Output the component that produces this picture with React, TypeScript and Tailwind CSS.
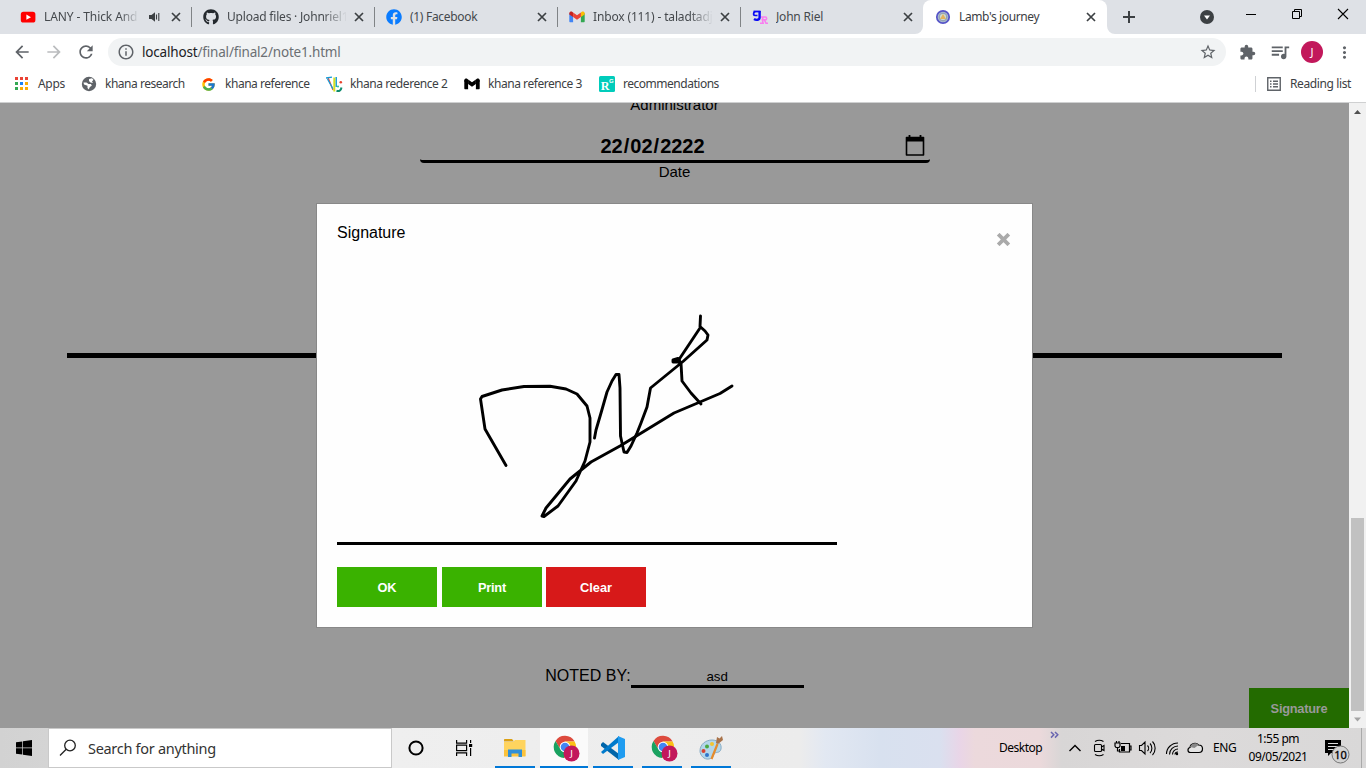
import type { ReactNode } from "react";
import { FaFacebook, FaGithub } from "react-icons/fa";
import { FcGoogle } from "react-icons/fc";
import {
  MdArrowBack,
  MdArrowForward,
  MdExtension,
  MdInfoOutline,
  MdMoreVert,
  MdQueueMusic,
  MdRefresh,
  MdStarBorder,
} from "react-icons/md";

const Cross = () => (
  <svg width="10" height="10" viewBox="0 0 10 10" stroke="#3c4043" strokeWidth="1.7">
    <path d="M1 1 9 9M9 1 1 9" />
  </svg>
);

const GmailIcon = ({ mono = false }: { mono?: boolean }) => (
  <svg width="16" height="16" viewBox="0 0 16 16">
    <path d="M.3 4v8.200c0 .6.4 1 1 1h2.800V7z" fill={mono ? "#000" : "#4285f4"} />
    <path d="M15.700 4v8.200c0 .6-.4 1-1 1h-2.800V7z" fill={mono ? "#000" : "#34a853"} />
    <path d="M.3 5.600V4.200C.3 2.800 2.300 2.100 3.400 2.900L4.100 3.400V8z" fill={mono ? "#000" : "#c5221f"} />
    <path d="M15.700 5.600V4.200c0-1.400-2-2.100-3.100-1.300l-.7.5V8z" fill={mono ? "#000" : "#fbbc04"} />
    <path d="M4.100 3.400 8 6.200l3.900-2.800V8L8 10.700 4.100 8z" fill={mono ? "#000" : "#ea4335"} />
  </svg>
);

const YoutubeIcon = () => (
  <svg width="16" height="16" viewBox="0 0 16 16">
    <rect x="0.8" y="2.8" width="14.6" height="10.8" rx="2.6" fill="#f00" />
    <path d="M6.4 5.600v5.200L11 8.200z" fill="#fff" />
  </svg>
);

const JrIcon = () => (
  <svg width="16" height="16" viewBox="0 0 16 16" fill="none">
    <path d="M1.500 2.500h7" stroke="#0a0af5" strokeWidth="1.800" />
    <path d="M3 2.500C1 4 1 6.500 3.500 6.500h2" stroke="#0a0af5" strokeWidth="1.700" />
    <path d="M7.600 2v6.500c0 2.500-3.500 3-5.600 1.500" stroke="#0a0af5" strokeWidth="2.400" />
    <path d="M9 8h4.500c1.500 0 1.500 2.800 0 2.800h-4M10.700 8v6M8 14.300h4M12.500 11l1.500 3.300h2" stroke="#f97df0" strokeWidth="1.600" />
  </svg>
);

const CrestIcon = () => (
  <svg width="16" height="16" viewBox="0 0 16 16">
    <circle cx="8" cy="8" r="6.200" fill="#a9b8cc" stroke="#5654c8" strokeWidth="1.700" />
    <circle cx="8" cy="8" r="3.800" fill="#cfdbcf" stroke="#7d8fa8" strokeWidth=".8" />
    <path d="M6.500 7.500 8 5l1.500 2.500L11 10H5z" fill="#e2b25c" />
  </svg>
);

type Tab = { icon: ReactNode; title: string; tone: string; audio?: boolean };

const tabs: Tab[] = [
  { icon: <YoutubeIcon />, title: "LANY - Thick And Thin", tone: "w-[95px] tracking-[-0.1px]", audio: true },
  { icon: <FaGithub size={16} color="#24292e" />, title: "Upload files · Johnriel123", tone: "w-[120px] tracking-[-0.2px]" },
  { icon: <FaFacebook size={16} color="#0a7cff" />, title: "(1) Facebook", tone: "w-[120px] tracking-[-0.3px]" },
  { icon: <GmailIcon />, title: "Inbox (111) - taladtadjo", tone: "w-[120px] tracking-[-0.15px]" },
  { icon: <JrIcon />, title: "John Riel", tone: "w-[120px] tracking-[-0.2px]" },
];

function TabStrip() {
  return (
    <div className="flex h-[34px] bg-[#dee1e6] pl-2">
      {tabs.map((t, i) => (
        <div key={t.title} className="flex h-[34px] w-[183px] shrink-0 items-center pl-3">
          <span className="h-4 w-4 shrink-0">{t.icon}</span>
          <span
            className={`ml-2 block shrink-0 overflow-hidden text-[12px] whitespace-nowrap text-[#45494d] ${t.tone} ${
              i === 2 || i === 4 ? "" : "[mask-image:linear-gradient(to_right,#000_80%,transparent)]"
            }`}
          >
            {t.title}
          </span>
          {t.audio && (
            <svg className="ml-[10px]" width="12" height="12" viewBox="0 0 12 12" fill="#3c4043">
              <path d="M0 4h2.500L6 1.200v9.600L2.500 8H0z" />
              <path d="M7.500 3.500v5M9.800 2v8" stroke="#3c4043" strokeWidth="1.100" />
            </svg>
          )}
          <span className={t.audio ? "ml-[10px]" : "ml-[7px]"}>
            <Cross />
          </span>
          {i < 4 && <span className="-mr-px ml-auto h-5 w-px bg-[#808386]" />}
        </div>
      ))}
      <div className="flex h-[34px] w-[184px] shrink-0 items-center rounded-t-lg bg-white pl-3">
        <CrestIcon />
        <span className="ml-2 w-[120px] text-[12px] tracking-[-0.38px] text-[#3c4043]">Lamb's journey</span>
        <span className="ml-[7px]">
          <Cross />
        </span>
      </div>
      <svg className="-ml-[192px] shrink-0" width="8" height="34" viewBox="0 0 8 34">
        <path d="M8 26v8H0a8 8 0 0 0 8-8" fill="#fff" />
      </svg>
      <svg className="ml-[184px] shrink-0" width="259" height="34" viewBox="1107 0 259 34" fill="none">
        <path d="M1107 26v8h8a8 8 0 0 1-8-8" fill="#fff" />
        <path d="M1129 11v12M1123 17h12" stroke="#3c4043" strokeWidth="2" />
        <circle cx="1207" cy="17" r="7" fill="#3c4043" />
        <path d="M1204 15.500h6l-3 4z" fill="#fff" />
        <path d="M1246 14.500h10" stroke="#000" />
        <path d="M1292.500 11.500h7v7h-7zM1294.500 11.500v-2h7v7h-2" stroke="#000" />
        <path d="m1338 9 10 10M1348 9l-10 10" stroke="#000" strokeWidth="1.100" />
      </svg>
    </div>
  );
}

function Toolbar() {
  return (
    <div className="flex h-9 items-center bg-white text-[#5f6368]">
      <MdArrowBack size={20} className="ml-3" />
      <MdArrowForward size={20} className="ml-3 text-[#babcbe]" />
      <MdRefresh size={20} className="ml-3" />
      <div className="ml-3 flex h-7 w-[1118px] items-center rounded-full bg-[#f1f3f4] pl-[9px]">
        <MdInfoOutline size={18} />
        <span className="ml-[7px] text-[13.5px] tracking-[-0.18px] text-[#6b6f73]">
          <span className="text-[#202124]">localhost</span>/final/final2/note1.html
        </span>
        <MdStarBorder size={18} className="mr-[9px] ml-auto" />
      </div>
      <MdExtension size={17} className="ml-[13px]" />
      <MdQueueMusic size={22} className="ml-[13px]" />
      <div className="ml-[10px] flex h-[22px] w-[22px] items-center justify-center rounded-full bg-[#c2185b] text-[11px] text-white">
        J
      </div>
      <MdMoreVert size={19} className="ml-[12px]" />
    </div>
  );
}

const AppsGrid = () => (
  <svg width="14" height="14" viewBox="0 0 14 14">
    <path d="M0 0h3v3H0zM5 0h3v3H5zM10 0h3v3h-3z" fill="#ea4335" />
    <path d="M0 5h3v3H0zM0 10h3v3H0z" fill="#34a853" />
    <path d="M5 5h3v3H5z" fill="#1a82f7" />
    <path d="M10 5h3v3h-3zM5 10h3v3H5zM10 10h3v3h-3z" fill="#fbac04" />
  </svg>
);

const VcIcon = () => (
  <svg width="17" height="17" viewBox="0 0 17 17" fill="none">
    <path d="m2 1.500 5 12.500" stroke="#f04a36" strokeWidth="1.300" />
    <path d="M0 2 6 1.200M1.500 3 7 13" stroke="#159bd7" strokeWidth="1.300" />
    <path d="M10.200 1v10" stroke="#159bd7" strokeWidth="1.500" />
    <path d="M8.300 1.500v14" stroke="#d4df22" strokeWidth="2" />
    <path d="M10.500 14.800c3 1 4.500-.8 5-3.300" stroke="#0c8a6c" strokeWidth="2" />
    <circle cx="14.800" cy="6.200" r="1.300" fill="#e8432d" />
    <circle cx="12" cy="10.500" r="1" fill="#27b99a" />
  </svg>
);

function Bookmarks() {
  return (
    <div className="flex h-[33px] items-center border-b border-[#cfd0d1] bg-white pb-[4px] text-[12px] whitespace-nowrap text-[#3c4043]">
      <span className="ml-[15px]">
        <AppsGrid />
      </span>
      <span className="ml-[9px] w-[43px] tracking-[-0.3px]">Apps</span>
      <svg width="16" height="16" viewBox="0 0 16 16">
        <circle cx="8" cy="8" r="7.200" fill="#5f6368" />
        <path d="M2.500 6.500h3l2 1.500h2.500l.8 1.800-2 1.200-1 2.500L6.500 12V9.800L3 8.500zM8 3l3-.8 1.500 1.600L11 5.500l1 1.500-2.500-.5L8 5z" fill="#fff" />
      </svg>
      <span className="ml-2 w-[96px] tracking-[-0.48px]">khana research</span>
      <FcGoogle size={15} />
      <span className="ml-[9px] w-[101px] tracking-[-0.47px]">khana reference</span>
      <VcIcon />
      <span className="ml-[7px] w-[114px] tracking-[-0.43px]">khana rederence 2</span>
      <GmailIcon mono />
      <span className="ml-2 w-[111px] tracking-[-0.45px]">khana reference 3</span>
      <svg width="16" height="16" viewBox="0 0 16 16">
        <rect width="16" height="16" rx="1.500" fill="#00ccbb" />
        <text x="1.800" y="13.500" fontSize="12" fontWeight="bold" fill="#fff" fontFamily="Liberation Serif">R</text>
        <text x="10" y="6.500" fontSize="6" fontWeight="bold" fill="#fff" fontFamily="Liberation Sans">G</text>
      </svg>
      <span className="ml-2 tracking-[-0.48px]">recommendations</span>
      <span className="ml-auto h-4 w-px bg-[#cfd1d4]" />
      <svg className="ml-[11px]" width="14" height="14" viewBox="0 0 14 14" stroke="#5f6368" fill="none">
        <path d="M.75.75h12.500v12.500H.75z" strokeWidth="1.400" />
        <path d="M3 4.200h1.500M3 7h1.500M3 9.800h1.500M6 4.200h5M6 7h5M6 9.800h5" strokeWidth="1.400" />
      </svg>
      <span className="ml-[9px] w-[76px] tracking-[-0.38px]">Reading list</span>
    </div>
  );
}

function Scrollbar() {
  return (
    <div className="flex h-full w-[17px] shrink-0 flex-col items-center justify-between bg-[#f1f1f1]">
      <svg width="17" height="17" viewBox="0 0 17 17">
        <path d="M5 11h7L8.500 7z" fill="#505050" />
      </svg>
      <div className="mt-auto h-[193px] w-[13px] bg-[#c1c1c1]" />
      <svg width="17" height="17" viewBox="0 0 17 17">
        <path d="M5 6.500h7l-3.500 4z" fill="#a3a3a3" />
      </svg>
    </div>
  );
}

function SignatureDialog() {
  return (
    <div className="absolute top-[100px] left-[316px] flex h-[425px] w-[717px] flex-col border border-[#888] bg-[#fefefe] px-5 pt-[19px]">
      <div className="flex h-5 items-start justify-between">
        <span className="text-base leading-5">Signature</span>
        <svg className="mt-[10px] mr-px" width="15" height="13" viewBox="0 0 15 13" fill="none" stroke="#aaa" strokeWidth="3.800">
          <path d="M2.200 1.200 12.800 11.800M12.800 1.200 2.200 11.800" />
        </svg>
      </div>
      <svg className="h-[302px] w-[500px] border-b-[3px] border-black" viewBox="337 243 500 299" fill="none" stroke="#000" strokeWidth="2.900" strokeLinecap="round" strokeLinejoin="round">
        <path d="M506 465.500 485 429 480.500 399 482 396.500 502 390 524 386.500 550 386.200 566 389 577 394 587 406 590 418 590 442 585 461 576 481 558 506 544 516.500 542 516 546 508 570 479 591 462 620 446 674 413 700 402 720 393.500 732 386" />
        <path d="M594.500 438 596 430 601 413 607 392 612 381 616 374.500 619 374.500 620 388 620.500 436 624 452 627 452.500 631 446 637 433 641 423 647 407 650.500 388 683 361.500 707 340 708 335 705 331 700 326.500 700.500 316M700 328 680 358 678 362 673 362 673 360 678 358.500 681 363 682 381 691 393 701 404" />
      </svg>
      <div className="mt-[22px] flex text-[12.8px] font-bold text-white">
        <button className="h-10 w-[100px] bg-[#3ab200] pt-px">OK</button>
        <button className="ml-[5px] h-10 w-[100px] bg-[#3ab200] pt-px tracking-[-0.25px]">Print</button>
        <button className="ml-1 h-10 w-[100px] bg-[#d71919] pt-px">Clear</button>
      </div>
    </div>
  );
}

function PageView() {
  return (
    <div className="flex h-[625px] overflow-hidden font-['Liberation_Sans',Arial,sans-serif]">
      <main className="relative flex h-full w-[1349px] shrink-0 flex-col items-center bg-[#999] text-black">
        <div className="-mt-[7px] h-[17px] text-[15px] leading-[17px]">Administrator</div>
        <div className="mt-[17px] flex h-[33px] w-[510px] items-center rounded-[4px] border-b-[3px] border-black">
          <div className="ml-[180px] flex pt-px text-[20px] font-bold">
            <span className="px-px">22</span>/<span className="px-px">02</span>/<span className="px-px">2222</span>
          </div>
          <svg className="mr-[5px] ml-auto" width="20" height="22" viewBox="0 0 20 22" fill="none" stroke="#000">
            <path d="M1.500 3.500h17v17.500h-17z" strokeWidth="1.600" strokeLinejoin="round" />
            <path d="M1 3h18v4.500H1z" fill="#000" strokeWidth="0" />
            <path d="M4.500 1v3M15.500 1v3" strokeWidth="1.800" />
          </svg>
        </div>
        <div className="h-[17px] text-[15px] leading-[17px]">Date</div>
        <div className="mt-[173px] h-[5px] w-[1215px] bg-black" />
        <div className="mt-[306px] flex h-6 items-start">
          <span className="text-base leading-[24px]">NOTED BY:</span>
          <span className="h-6 w-[173px] border-b-[3px] border-black pt-[4px] text-center text-[13.333px] leading-[17px]">asd</span>
        </div>
        <button className="mt-auto h-10 w-[100px] self-end bg-[#236b00] pt-px text-[12.8px] font-bold tracking-[-0.25px] text-[#999]">
          Signature
        </button>
        <SignatureDialog />
      </main>
      <Scrollbar />
    </div>
  );
}

const FolderIcon = () => (
  <svg width="24" height="24" viewBox="0 0 24 24">
    <path d="M1 4c0-.6.400-1 1-1h7l2 2.500H1z" fill="#dba013" />
    <path d="M1 6h9l2-2h10.500v16H1z" fill="#ffd45e" />
    <path d="M1 14h21.500v6.500H1z" fill="#fbc23c" />
    <path d="M5 13.500h14V21h-3.500v-3.500h-7V21H5z" fill="#2f8fd8" />
  </svg>
);

const ChromeIcon = () => (
  <svg className="ml-[3px]" width="28" height="28" viewBox="0 0 28 28">
    <path d="M3.500 7A11 11 0 0 1 22.600 7.500L12.800 7.500 7.500 14z" fill="#dd4b3e" />
    <path d="M3.500 7A11 11 0 0 0 12 24l4.500-6L8 14.500z" fill="#1aa260" />
    <path d="M22.600 7.500A11 11 0 0 1 12 24l5.500-11-4.700-5.500z" fill="#fbc116" />
    <circle cx="13" cy="13" r="5.300" fill="#fff" />
    <circle cx="13" cy="13" r="4.300" fill="#4285f4" />
    <circle cx="19.500" cy="19.500" r="8" fill="#c2185b" />
    <text x="19.500" y="23" textAnchor="middle" fontSize="9.500" fill="#fff" fontFamily="Noto Sans">J</text>
  </svg>
);

const CodeIcon = () => (
  <svg width="26" height="26" viewBox="0 0 26 26">
    <path d="m1 9 2-2 16 12v6L1 11z" fill="#0065a9" />
    <path d="M1 17 19 1v6L3 19z" fill="#007acc" />
    <path d="m18 1 7 3v18l-7 3z" fill="#1f9cf0" />
  </svg>
);

const PaintIcon = () => (
  <svg width="26" height="26" viewBox="0 0 26 26">
    <path d="M2 16C2 9 8 5 14 5s10 4 9 9c-1 4-4 3-6 4s-1 5-6 6S2 20 2 16z" fill="#b3d6ea" stroke="#86abc4" />
    <circle cx="5.500" cy="16" r="2" fill="#d9422e" />
    <circle cx="9" cy="11.500" r="2" fill="#49a942" />
    <circle cx="14" cy="9" r="2" fill="#f4c430" />
    <circle cx="9" cy="20" r="2" fill="#2f74c9" />
    <path d="m13.500 24 6-15" stroke="#e58b2c" strokeWidth="2.200" />
    <path d="m18 8 1-6 2.500 1.500L24 1l1 4-5 4z" fill="#a9734a" />
  </svg>
);

const apps = [
  { key: "files", icon: <FolderIcon />, cell: "w-[50px]", bar: "w-10" },
  { key: "chrome", icon: <ChromeIcon />, cell: "w-12 bg-[#fafafa]", bar: "w-12" },
  { key: "code", icon: <CodeIcon />, cell: "w-[50px]", bar: "w-10" },
  { key: "chrome2", icon: <ChromeIcon />, cell: "w-12", bar: "w-10" },
  { key: "paint", icon: <PaintIcon />, cell: "w-[50px]", bar: "w-10" },
];

function Taskbar() {
  return (
    <div className="flex h-10 bg-[linear-gradient(90deg,#d2d2d2_0px,#d4d4d4_48px,#efefef_392px,#ececec_800px,#e2e8f2_825px,#d8e1ef_880px,#dae0ef_940px,#e9d5e7_960px,#ecd9dc_975px,#ebd9db_1040px,#d8d6d6_1062px,#dcdada_1200px,#d9d8d8_1366px)] text-black">
      <div className="flex w-12 items-center justify-center">
        <svg width="16" height="16" viewBox="0 0 16 16">
          <path d="M0 2.300 6.300 1.400v6.100H0zM7 1.300 16 0v7.500H7zM0 8.300h6.300v6.200L0 13.700zM7 8.300h9V16l-9-1.300z" />
        </svg>
      </div>
      <div className="flex w-[344px] items-center border border-[#c9c9c9] bg-white pl-[10px]">
        <svg width="18" height="18" viewBox="0 0 18 18" fill="none" stroke="#222" strokeWidth="1.300">
          <circle cx="11" cy="6.500" r="5.300" />
          <path d="M7.200 10.300 1 16.500" />
        </svg>
        <span className="ml-[11px] pt-0.5 text-[14.500px] tracking-[-0.3px] text-[#333]">Search for anything</span>
      </div>
      <div className="flex w-12 items-center justify-center">
        <svg width="16" height="16" viewBox="0 0 16 16">
          <circle cx="8" cy="8" r="6.600" fill="none" stroke="#000" strokeWidth="2" />
        </svg>
      </div>
      <div className="flex w-[50px] items-center pl-4">
        <svg width="17" height="16" viewBox="0 0 17 16" fill="none" stroke="#000" strokeWidth="1.200">
          <path d="M.6 0v3.200h10V0M.6 16v-3.200h10V16M.6 5.200h10v5.400H.6zM14.600 0v3M14.600 8v8" />
          <path d="M13 4h3.200v3H13z" fill="#000" strokeWidth="0" />
        </svg>
      </div>
      {apps.map((a) => (
        <div key={a.key} className={`flex flex-col items-center ${a.cell}`}>
          <div className="flex h-[38px] items-center justify-center pt-px">{a.icon}</div>
          <div className={`h-0.5 bg-[#0078d7] ${a.bar}`} />
        </div>
      ))}
      <div className="flex flex-1 items-center">
        <span className="ml-[263px] w-[51px] text-[12px] tracking-[-0.5px]">Desktop</span>
        <svg width="10" height="40" viewBox="1050 728 10 40" fill="none" stroke="#6a66b0" strokeWidth="1.500">
          <path d="m1051 732 2.800 2.800-2.800 2.800M1055 732l2.800 2.800-2.800 2.800" />
        </svg>
        <svg width="152" height="40" viewBox="1060 728 152 40" fill="none" stroke="#000" strokeWidth="1.200">
          <path d="m1069.500 751 5.500-5.500 5.500 5.500" strokeWidth="1.400" />
          <path d="M1095.500 744.500h5a1 1 0 0 1 1 1v5a1 1 0 0 1-1 1h-5a1 1 0 0 1-1-1v-5a1 1 0 0 1 1-1zM1101.500 747l2.500-1.500v5l-2.500-1.500M1095 741.500c2.500-1.500 6-1.500 8.500 0M1095 754.500c2.500 1.500 6 1.500 8.500 0" strokeWidth="1.100" />
          <path d="M1121 743.500h8.500v8.500H1119.500v-3M1129.500 746h1.500v4h-1.500M1115 743h5v3l-1 1.500h-3l-1-1.500zM1116.500 741v2M1119 741v2M1117.500 748v3h2" />
          <path d="M1121 746h4v5h-4z" fill="#000" strokeWidth="0" />
          <path d="M1139.500 745.500h2l3.500-3.500v12l-3.500-3.500h-2zM1147.500 745.500c1.500 1.500 1.500 4 0 5.500M1150 743.500c2.500 2.500 2.500 7 0 9.500M1152.500 741.500c3.500 3.500 3.500 10 0 13.500" strokeWidth="1.100" />
          <path d="M1166.500 754c0-6 5-11 11.500-11M1169.500 754.500c0-5 4-8.500 8.500-8.500M1172.500 754.500c0-3 2.500-5.500 5.500-5.500M1175 754.500c0-1.500 1.500-2.500 3-2.500" strokeWidth="1.100" />
          <circle cx="1177" cy="754" r="1.200" fill="#000" strokeWidth="0" />
          <path d="M1190.500 752.500c-3 0-3.500-4-.5-5 .5-4 6-5.500 8.500-2.500 2 0 4 1 4 3.800 0 2.200-1.500 3.700-3.500 3.700z" fill="#e4e4e4" />
          <path d="M1190 747c1-4 6.500-5 8.500-2l-4 3z" fill="#888" stroke="none" />
        </svg>
        <span className="ml-px w-[30px] text-[12px] tracking-[-0.4px]">ENG</span>
        <div className="flex w-[70px] flex-col items-center text-[12px] leading-[18px] tracking-[-0.5px]">
          <span>1:55 pm</span>
          <span>09/05/2021</span>
        </div>
        <svg className="ml-auto" width="53" height="40" viewBox="1313 728 53 40">
          <path d="M1325 740h16v13h-10l-3 3v-3h-3z" />
          <path d="M1328 743.500h10M1328 746.500h10M1328 749.500h6" stroke="#ddd" />
          <circle cx="1340.500" cy="754.500" r="8.500" fill="#d3d3d3" stroke="#777" />
          <text x="1340.500" y="758.500" textAnchor="middle" fontSize="11" stroke="#000" strokeWidth=".3" fontFamily="Noto Sans">10</text>
          <path d="M1361.500 728v40" stroke="#aaa" />
        </svg>
      </div>
    </div>
  );
}

export default function App() {
  return (
    <div className="flex h-[768px] w-[1366px] flex-col overflow-hidden font-['Noto_Sans',sans-serif]">
      <TabStrip />
      <Toolbar />
      <Bookmarks />
      <PageView />
      <Taskbar />
    </div>
  );
}
